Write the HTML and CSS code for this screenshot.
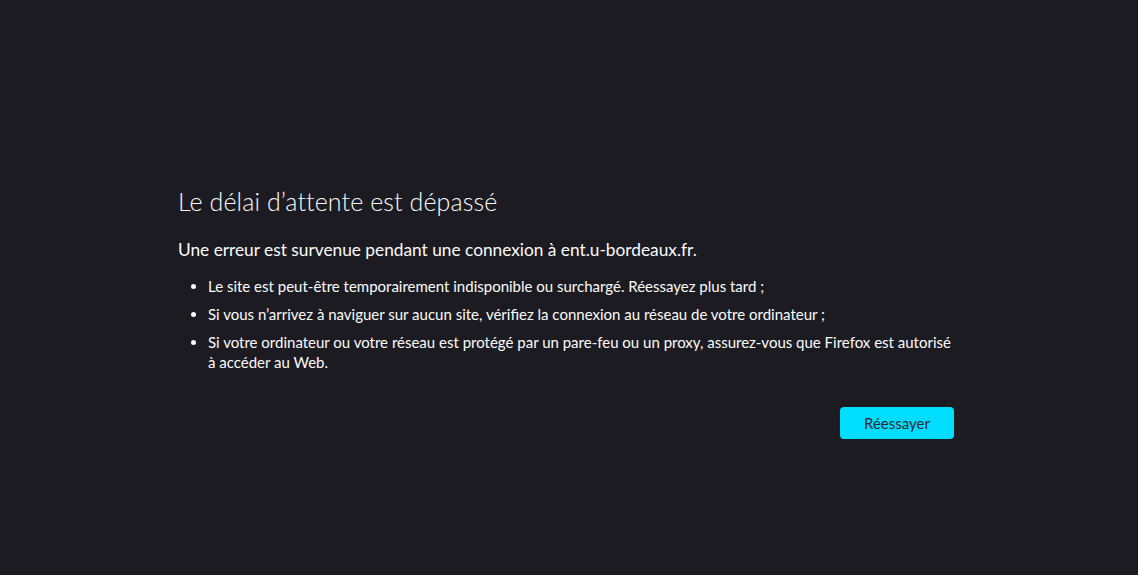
FILE: index.html
```html
<!DOCTYPE html>
<html lang="fr">
<head>
<meta charset="utf-8">
<title>Problème de chargement de la page</title>
<link rel="stylesheet" href="styles.css">
</head>
<body>
<main class="container">
  <h1 class="title">Le délai d’attente est dépassé</h1>
  <p class="intro">Une erreur est survenue pendant une connexion à ent.u-bordeaux.fr.</p>
  <ul class="advice">
    <li>Le site est peut-être temporairement indisponible ou surchargé. Réessayez plus tard ;</li>
    <li>Si vous n’arrivez à naviguer sur aucun site, vérifiez la connexion au réseau de votre ordinateur ;</li>
    <li>Si votre ordinateur ou votre réseau est protégé par un pare-feu ou un proxy, assurez-vous que Firefox est autorisé à accéder au Web.</li>
  </ul>
  <div class="actions">
    <button class="retry" type="button">Réessayer</button>
  </div>
</main>
</body>
</html>
```

FILE: styles.css
```css
html, body {
  margin: 0;
  padding: 0;
  height: 100%;
  background: #1c1b22;
}

body {
  color: #fbfbfe;
  font-family: "Lato", "Open Sans", sans-serif;
}

.container {
  width: 776px;
  margin-left: 178px;
  padding-top: 184px;
}

.title {
  margin: 0;
  font-size: 25px;
  font-weight: 300;
  line-height: 34px;
  letter-spacing: 0.1px;
}

.intro {
  margin: 20px 0 0;
  font-size: 17.3px;
  line-height: 24px;
}

.advice {
  margin: 14px 0 0;
  padding-left: 30px;
  font-size: 15px;
  line-height: 20px;
}

.advice li {
  margin-bottom: 8px;
}

.actions {
  display: flex;
  justify-content: flex-end;
  margin-top: 35px;
}

.retry {
  width: 114px;
  height: 32px;
  border: none;
  border-radius: 4px;
  background: #00ddff;
  color: #2b2a33;
  font-family: inherit;
  font-size: 15px;
  cursor: pointer;
}
```
